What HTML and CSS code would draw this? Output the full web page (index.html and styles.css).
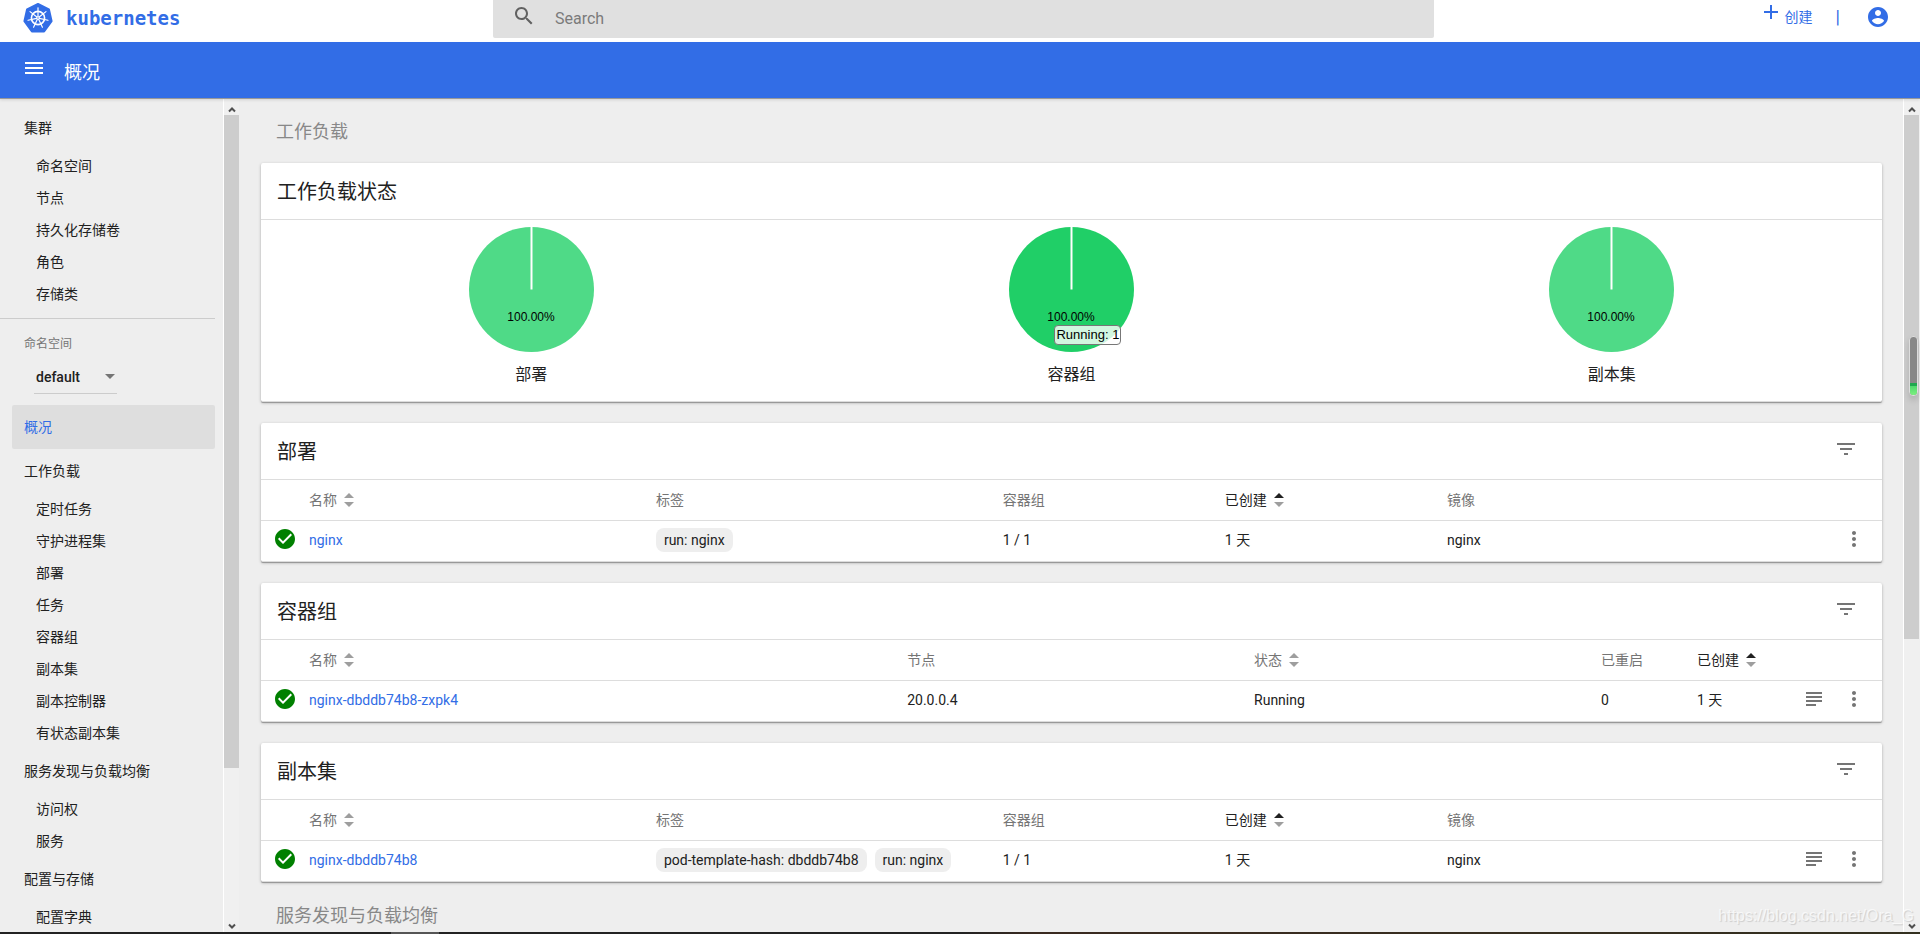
FILE: index.html
```
<!DOCTYPE html>
<html lang="zh-CN">
<head>
<meta charset="utf-8">
<title>概况 - Kubernetes Dashboard</title>
<link rel="stylesheet" href="styles.css">
</head>
<body>
<svg class="defs" aria-hidden="true">
  <symbol id="i-check" viewBox="0 0 24 24"><path d="M12 2C6.48 2 2 6.48 2 12s4.48 10 10 10 10-4.480 10-10S17.520 2 12 2zm-2 15l-5-5 1.410-1.410L10 14.170l7.590-7.590L19 8l-9 9z"/></symbol>
  <symbol id="i-filter" viewBox="0 0 24 24"><path d="M10 18h4v-2h-4v2zM3 6v2h18V6H3zm3 7h12v-2H6v2z"/></symbol>
  <symbol id="i-more" viewBox="0 0 24 24"><path d="M12 8c1.100 0 2-.9 2-2s-.9-2-2-2-2 .9-2 2 .9 2 2 2zm0 2c-1.100 0-2 .9-2 2s.9 2 2 2 2-.9 2-2-.9-2-2-2zm0 6c-1.100 0-2 .9-2 2s.9 2 2 2 2-.9 2-2-.9-2-2-2z"/></symbol>
  <symbol id="i-logs" viewBox="0 0 24 24"><path d="M4 5h16v2H4zM4 9h16v2H4zM4 13h16v2H4zM4 17h10v2H4z"/></symbol>
  <symbol id="i-sort" viewBox="0 0 10 14"><path class="up" d="M0 5l5-5 5 5z"/><path d="M0 9h10l-5 5z"/></symbol>
  <symbol id="i-up" viewBox="0 0 8 6"><path d="M1 5l3-3 3 3" fill="none" stroke="#505050" stroke-width="2"/></symbol>
  <symbol id="i-down" viewBox="0 0 8 6"><path d="M1 1l3 3 3-3" fill="none" stroke="#505050" stroke-width="2"/></symbol>
</svg>

<header class="topbar">
  <a class="brand" href="#">
    <svg class="logo" viewBox="-15 -15 30 30" aria-hidden="true">
      <path d="M0-14 10.900-8.700 13.600 3.100 6.100 13.500H-6.100L-13.600 3.100-10.900-8.700z" fill="#326de6" stroke="#326de6" stroke-width="2" stroke-linejoin="round"/>
      <g fill="none" stroke="#fff">
        <circle r="6.600" stroke-width="1.600"/>
        <g id="spoke" stroke-width="1.200" stroke-linecap="round"><path d="M0-1.500V-10.200"/></g>
        <use href="#spoke" transform="rotate(51.430)"/>
        <use href="#spoke" transform="rotate(102.860)"/>
        <use href="#spoke" transform="rotate(154.290)"/>
        <use href="#spoke" transform="rotate(205.710)"/>
        <use href="#spoke" transform="rotate(257.140)"/>
        <use href="#spoke" transform="rotate(308.570)"/>
      </g>
      <circle r="1.800" fill="#fff"/><circle r=".7" fill="#326de6"/>
    </svg>
    <span>kubernetes</span>
  </a>
  <label class="search">
    <svg class="icon" viewBox="0 0 24 24" aria-hidden="true"><path d="M15.500 14h-.79l-.28-.27C15.410 12.590 16 11.110 16 9.500 16 5.910 13.090 3 9.500 3S3 5.910 3 9.500 5.910 16 9.500 16c1.610 0 3.090-.59 4.230-1.570l.27.28v.79l5 4.990L20.490 19l-4.990-5zm-6 0C7.010 14 5 11.990 5 9.500S7.010 5 9.500 5 14 7.010 14 9.500 11.990 14 9.500 14z"/></svg>
    <input type="text" placeholder="Search" aria-label="Search">
  </label>
  <div class="actions">
    <button class="create" type="button">
      <svg class="icon" viewBox="0 0 24 24" aria-hidden="true"><path d="M19 13h-6v6h-2v-6H5v-2h6V5h2v6h6v2z"/></svg>
      <span>创建</span>
    </button>
    <span class="sep">|</span>
    <button type="button" aria-label="用户">
      <svg class="icon" viewBox="0 0 24 24" aria-hidden="true"><path d="M12 2C6.480 2 2 6.480 2 12s4.480 10 10 10 10-4.480 10-10S17.520 2 12 2zm0 3c1.660 0 3 1.340 3 3s-1.340 3-3 3-3-1.340-3-3 1.340-3 3-3zm0 14.200c-2.500 0-4.710-1.280-6-3.220.03-1.990 4-3.080 6-3.080 1.990 0 5.970 1.090 6 3.080-1.290 1.940-3.500 3.220-6 3.220z"/></svg>
    </button>
  </div>
</header>

<div class="titlebar">
  <button type="button" aria-label="菜单">
    <svg class="icon" viewBox="0 0 24 24" aria-hidden="true"><path d="M3 18h18v-2H3v2zm0-5h18v-2H3v2zm0-7v2h18V6H3z"/></svg>
  </button>
  <h1>概况</h1>
</div>

<div class="body">
  <nav class="sidebar">
    <a class="group" href="#">集群</a>
    <a class="item" href="#">命名空间</a>
    <a class="item" href="#">节点</a>
    <a class="item" href="#">持久化存储卷</a>
    <a class="item" href="#">角色</a>
    <a class="item" href="#">存储类</a>
    <div class="namespace">
      <label for="ns">命名空间</label>
      <div class="select">
        <select id="ns"><option>default</option></select>
        <svg viewBox="0 0 10 5" aria-hidden="true"><path d="M0 0h10L5 5z"/></svg>
      </div>
    </div>
    <a class="group active" href="#">概况</a>
    <a class="group" href="#">工作负载</a>
    <a class="item" href="#">定时任务</a>
    <a class="item" href="#">守护进程集</a>
    <a class="item" href="#">部署</a>
    <a class="item" href="#">任务</a>
    <a class="item" href="#">容器组</a>
    <a class="item" href="#">副本集</a>
    <a class="item" href="#">副本控制器</a>
    <a class="item" href="#">有状态副本集</a>
    <a class="group" href="#">服务发现与负载均衡</a>
    <a class="item" href="#">访问权</a>
    <a class="item" href="#">服务</a>
    <a class="group" href="#">配置与存储</a>
    <a class="item" href="#">配置字典</a>
  </nav>
  <div class="scrollbar side-scroll" aria-hidden="true">
    <svg><use href="#i-up"/></svg><div class="thumb"></div><div class="track"></div><svg><use href="#i-down"/></svg>
  </div>

  <main>
    <h2 class="section">工作负载</h2>

    <section class="card">
      <header><h3>工作负载状态</h3></header>
      <div class="charts">
        <figure>
          <svg class="pie" viewBox="0 0 125 125"><circle cx="62.500" cy="62.500" r="62.500"/><path d="M62.500 0V62.500"/><text x="62" y="94">100.00%</text></svg>
          <figcaption>部署</figcaption>
        </figure>
        <figure class="hover">
          <svg class="pie" viewBox="0 0 125 125"><circle cx="62.500" cy="62.500" r="62.500"/><path d="M62.500 0V62.500"/><text x="62" y="94">100.00%</text></svg>
          <div class="tip">Running: 1</div>
          <figcaption>容器组</figcaption>
        </figure>
        <figure>
          <svg class="pie" viewBox="0 0 125 125"><circle cx="62.500" cy="62.500" r="62.500"/><path d="M62.500 0V62.500"/><text x="62" y="94">100.00%</text></svg>
          <figcaption>副本集</figcaption>
        </figure>
      </div>
    </section>

    <section class="card">
      <header><h3>部署</h3><button type="button" aria-label="筛选"><svg class="icon"><use href="#i-filter"/></svg></button></header>
      <table>
        <colgroup><col class="c-icon"><col class="c-l"><col class="c-l"><col class="c-m"><col class="c-m"><col><col class="c-logs"><col class="c-menu"></colgroup>
        <thead><tr><th></th><th>名称<svg class="sort"><use href="#i-sort"/></svg></th><th>标签</th><th>容器组</th><th class="sorted">已创建<svg class="sort"><use href="#i-sort"/></svg></th><th>镜像</th><th></th><th></th></tr></thead>
        <tbody><tr><td class="status"><svg class="icon"><use href="#i-check"/></svg></td><td><a href="#">nginx</a></td><td><span class="chip">run: nginx</span></td><td>1 / 1</td><td>1 天</td><td>nginx</td><td></td><td class="menu"><button type="button" aria-label="更多"><svg class="icon"><use href="#i-more"/></svg></button></td></tr></tbody>
      </table>
    </section>

    <section class="card">
      <header><h3>容器组</h3><button type="button" aria-label="筛选"><svg class="icon"><use href="#i-filter"/></svg></button></header>
      <table>
        <colgroup><col class="c-icon"><col class="c-xl"><col class="c-l"><col class="c-l"><col class="c-s"><col><col class="c-logs"><col class="c-menu"></colgroup>
        <thead><tr><th></th><th>名称<svg class="sort"><use href="#i-sort"/></svg></th><th>节点</th><th>状态<svg class="sort"><use href="#i-sort"/></svg></th><th>已重启</th><th class="sorted">已创建<svg class="sort"><use href="#i-sort"/></svg></th><th></th><th></th></tr></thead>
        <tbody><tr><td class="status"><svg class="icon"><use href="#i-check"/></svg></td><td><a href="#">nginx-dbddb74b8-zxpk4</a></td><td>20.0.0.4</td><td>Running</td><td>0</td><td>1 天</td><td class="logs"><button type="button" aria-label="日志"><svg class="icon"><use href="#i-logs"/></svg></button></td><td class="menu"><button type="button" aria-label="更多"><svg class="icon"><use href="#i-more"/></svg></button></td></tr></tbody>
      </table>
    </section>

    <section class="card">
      <header><h3>副本集</h3><button type="button" aria-label="筛选"><svg class="icon"><use href="#i-filter"/></svg></button></header>
      <table>
        <colgroup><col class="c-icon"><col class="c-l"><col class="c-l"><col class="c-m"><col class="c-m"><col><col class="c-logs"><col class="c-menu"></colgroup>
        <thead><tr><th></th><th>名称<svg class="sort"><use href="#i-sort"/></svg></th><th>标签</th><th>容器组</th><th class="sorted">已创建<svg class="sort"><use href="#i-sort"/></svg></th><th>镜像</th><th></th><th></th></tr></thead>
        <tbody><tr><td class="status"><svg class="icon"><use href="#i-check"/></svg></td><td><a href="#">nginx-dbddb74b8</a></td><td><span class="chip">pod-template-hash: dbddb74b8</span><span class="chip">run: nginx</span></td><td>1 / 1</td><td>1 天</td><td>nginx</td><td class="logs"><button type="button" aria-label="日志"><svg class="icon"><use href="#i-logs"/></svg></button></td><td class="menu"><button type="button" aria-label="更多"><svg class="icon"><use href="#i-more"/></svg></button></td></tr></tbody>
      </table>
    </section>

    <h2 class="section">服务发现与负载均衡</h2>
  </main>
  <div class="scrollbar main-scroll" aria-hidden="true">
    <svg><use href="#i-up"/></svg><div class="thumb"></div><div class="track"></div><svg><use href="#i-down"/></svg>
  </div>
  <div class="meter" aria-hidden="true"><div></div></div>
  <div class="watermark">https://blog.csdn.net/Ora_G</div>
</div>
<div class="edge"><div></div></div>
</body>
</html>
```

FILE: styles.css
```
* { box-sizing: border-box; }

body {
  margin: 0;
  height: 100vh;
  display: flex;
  flex-direction: column;
  overflow: hidden;
  background: #eee;
  color: #212121;
  font: 14px/20px Roboto, "Noto Sans CJK SC", sans-serif;
}

h1, h2, h3, figure { margin: 0; font-weight: 400; }
a { color: #326de6; text-decoration: none; }

button {
  display: inline-flex;
  align-items: center;
  padding: 0;
  border: 0;
  background: none;
  color: inherit;
  font: inherit;
}

.defs { position: absolute; width: 0; height: 0; }
.icon { display: block; width: 24px; height: 24px; fill: currentColor; }

/* Top bar */
.topbar {
  flex: none;
  display: grid;
  grid-template-columns: 493fr 941fr 486fr;
  height: 42px;
  background: #fff;
}

.brand {
  display: flex;
  align-items: center;
  gap: 13px;
  padding: 0 0 6px 23px;
  font: bold 19px/24px "DejaVu Sans Mono", monospace;
}
.logo { width: 30px; height: 30px; }

.search {
  display: flex;
  align-items: center;
  gap: 19px;
  height: 38px;
  padding-left: 19px;
  background: #e0e0e0;
  border-radius: 0 0 2px 2px;
  color: #616161;
}
.search .icon { margin-bottom: 6px; }
.search input {
  flex: 1;
  padding: 0;
  border: 0;
  outline: 0;
  background: none;
  font: 16px/24px Roboto, sans-serif;
}
.search input::placeholder { color: #7b7b7b; opacity: 1; }

.actions {
  display: flex;
  align-items: center;
  justify-content: flex-end;
  gap: 23px;
  padding: 0 30px 8px 0;
  color: #326de6;
}
.create { gap: 2px; }
.create .icon { margin-bottom: 10px; }
.sep { margin-right: 3px; font-size: 18px; }

/* Title bar */
.titlebar {
  flex: none;
  display: flex;
  align-items: center;
  gap: 18px;
  height: 56px;
  padding-left: 22px;
  background: #326de6;
  color: #fff;
  box-shadow: 0 1px 0 #999, 0 2px 3px rgba(0, 0, 0, .12);
  z-index: 1;
}
.titlebar button { padding-bottom: 4px; }
.titlebar h1 { padding-top: 6px; font-size: 18px; line-height: 24px; }

/* Body */
.body {
  position: relative;
  flex: 1;
  min-height: 0;
  display: flex;
}

.sidebar {
  flex: none;
  width: 223px;
  padding: 8px 8px 0 0;
  overflow: hidden;
}
.sidebar a { display: block; color: #212121; }
.group {
  margin-left: 12px;
  padding: 12px;
  border-radius: 2px;
}
.item { padding: 6px 36px; }
.sidebar .active { background: #dedede; color: #326de6; }

.namespace {
  margin: 8px 0 11px;
  padding: 15px 24px 0;
  border-top: 1px solid #ccc;
}
.namespace label {
  display: block;
  color: #757575;
  font-size: 12px;
}
.select {
  display: flex;
  align-items: center;
  width: 83px;
  margin: 6px 0 0 10px;
  padding-right: 2px;
  border-bottom: 1px solid #ccc;
}
.select select {
  flex: 1;
  min-width: 0;
  height: 33px;
  padding: 0 2px;
  border: 0;
  background: none;
  appearance: none;
  color: #212121;
  font: 500 14px/20px Roboto, sans-serif;
}
.select svg { width: 10px; height: 5px; fill: #757575; }

.scrollbar {
  flex: none;
  display: flex;
  flex-direction: column;
  width: 16px;
  border-left: 1px solid #fff;
  background: #f0f0f0;
}
.scrollbar svg { flex: none; width: 8px; height: 17px; margin: 0 auto; padding-top: 6px; }
.thumb { background: #cdcdcd; }
.side-scroll .thumb { flex: 653; }
.side-scroll .track { flex: 147; }
.main-scroll { width: 17px; border-right: 1px solid #f0f0f0; }
.main-scroll .thumb { flex: 524; }
.main-scroll .track { flex: 276; }

main {
  flex: 1;
  min-width: 0;
  padding: 0 21px 0 22px;
  overflow: hidden;
}

.section {
  padding: 22px 15px 19px;
  color: #888;
  font-size: 18px;
  line-height: 24px;
}

.card {
  margin-bottom: 21px;
  background: #fff;
  border-bottom: 1px solid #ddd;
  border-radius: 2px;
  box-shadow: 0 1px 0 #999, 0 1px 3px rgba(0, 0, 0, .3);
}
.card:last-of-type { margin-bottom: 0; }
.card header {
  display: flex;
  align-items: center;
  justify-content: space-between;
  height: 56px;
  padding: 0 24px 0 16px;
}
.card h3 { padding-top: 2px; font-size: 20px; line-height: 28px; }
.card button { color: #757575; }
.card header button { padding-bottom: 4px; }

/* Charts */
.charts {
  display: grid;
  grid-template-columns: repeat(3, 1fr);
  padding: 7px 0 3px;
  border-top: 1px solid #ddd;
}
.charts figure { position: relative; text-align: center; }
.pie { display: block; width: 125px; height: 125px; margin: 0 auto; }
.pie circle { fill: #4fda87; }
.hover .pie circle { fill: #20cf67; }
.pie path { stroke: #fff; stroke-width: 2; }
.pie text { font: 12px "Liberation Sans", Arial, sans-serif; text-anchor: middle; fill: #000; }
.charts figcaption { padding: 11px 0; font-size: 16px; line-height: 24px; }
.tip {
  position: absolute;
  left: 50%;
  top: 98px;
  margin-left: -17px;
  padding: 0 1px;
  border: 1px solid #777;
  border-radius: 4px;
  background: rgba(255, 255, 255, .8);
  color: #000;
  font: 13px/18px "Liberation Sans", Arial, sans-serif;
}

/* Tables */
table { width: 100%; table-layout: fixed; border-collapse: separate; border-spacing: 0; }
th, td {
  height: 41px;
  padding: 0;
  border-top: 1px solid #ddd;
  text-align: left;
  font-weight: 400;
  white-space: nowrap;
}
th { color: #757575; }
td { padding-bottom: 2px; }
.sorted { color: #212121; }
td.status { padding-left: 12px; }
.status .icon { fill: #008000; }
.status .icon, .card td button { margin-bottom: 2px; }
.card td button { vertical-align: middle; }
.logs { text-align: right; }
.menu { text-align: center; }
.sort {
  width: 10px;
  height: 14px;
  margin-left: 7px;
  vertical-align: -2px;
  color: #9e9e9e;
  fill: #9e9e9e;
}
.sorted .sort { color: #212121; }
.up { fill: currentColor; }

.c-icon { width: 48px; }
.c-xl { width: 36.9%; }
.c-l { width: 21.4%; }
.c-m { width: 13.7%; }
.c-s { width: 96px; }
.c-logs { width: 40px; }
.c-menu { width: 56px; }

.chip {
  display: inline-block;
  margin-right: 8px;
  padding: 2px 8px;
  border-radius: 8px;
  background: #eee;
}

/* Overlays */
.meter {
  position: absolute;
  right: 2px;
  top: 238px;
  display: flex;
  align-items: flex-end;
  width: 9px;
  height: 60px;
  border: 1px solid #ddd;
  border-radius: 4px;
  overflow: hidden;
  background: #888;
  box-shadow: 0 4px 6px rgba(0, 0, 0, .15);
}
.meter div {
  flex: 1;
  height: 12px;
  border-top: 3px solid #1fa84f;
  background: linear-gradient(#4fd86e, #7df07f);
}
.watermark {
  position: absolute;
  right: 6px;
  bottom: 6px;
  color: rgba(255, 255, 255, .7);
  font: 16px/20px "Liberation Sans", Arial, sans-serif;
  text-shadow: 1px 1px 1px rgba(0, 0, 0, .14);
}

.edge {
  flex: none;
  height: 2px;
  background: linear-gradient(90deg, #222 50%, #3a2a20 54%, #33301f);
}
.edge div { width: 48px; height: 2px; margin-left: 391px; background: #555; }
```
